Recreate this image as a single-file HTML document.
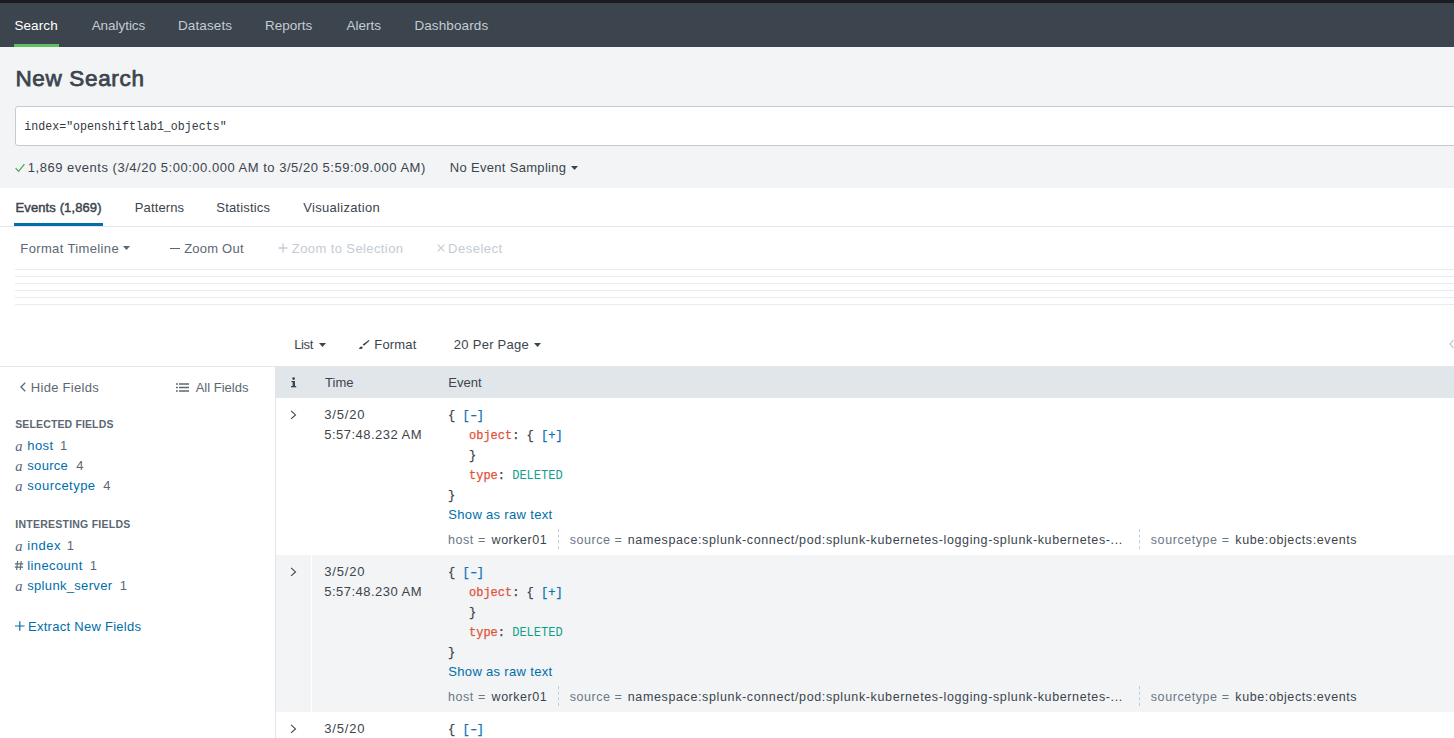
<!DOCTYPE html>
<html><head><meta charset="utf-8">
<style>
*{margin:0;padding:0;box-sizing:border-box}
html,body{width:1454px;height:738px;overflow:hidden;background:#fff;font-family:"Liberation Sans",sans-serif;color:#3c444d}
.t{position:absolute;white-space:nowrap}
.b{position:absolute}
.s{position:absolute}
.r{position:absolute;left:276px;width:1178px;height:157px}
.tri{position:absolute;width:0;height:0;border-left:3.5px solid transparent;border-right:3.5px solid transparent;border-top:5px solid #3c444d}
.tl{position:absolute;left:15px;width:1439px;height:1px;background:#e9ebed}
.js{position:absolute;font-family:"Liberation Mono",monospace;font-size:12px;line-height:20px;color:#3c444d;white-space:nowrap}
.js .in{padding-left:21px}
.js{-webkit-text-stroke:0.25px currentColor}
.bl{color:#0b72b5}
.ky{color:#e0533a}
.vs{color:#12a08a;-webkit-text-stroke:0}
.sep{position:absolute;width:0;height:20px;border-left:1px dashed #c3cbd4}
</style></head><body>
<div class="b" style="left:0;top:0;width:1454px;height:3px;background:#1a1c21"></div>
<div class="b" style="left:0;top:3px;width:1454px;height:44px;background:#3c444d"></div>
<div class="b" style="left:14px;top:44px;width:45px;height:3px;background:#5cc05c"></div>
<div class="b" style="left:0;top:47px;width:1454px;height:141px;background:#f2f4f5"></div>
<div class="b" style="left:15px;top:106px;width:1450px;height:40px;background:#fff;border:1px solid #c3cbd4;border-radius:3px"></div>
<svg class="s" style="left:15px;top:163px" width="10" height="10" viewBox="0 0 10 10"><path d="M0.6 5.2 L3.6 8.4 L9.4 1.2" fill="none" stroke="#4aa54a" stroke-width="1.2"/></svg>
<svg class="s" style="left:570.5px;top:166px" width="7" height="4" viewBox="0 0 7 4"><path d="M0 0 H7 L3.5 4 Z" fill="#3c444d"/></svg>
<div class="b" style="left:14px;top:223px;width:89px;height:3px;background:#006eaa"></div>
<div class="b" style="left:0;top:226px;width:1454px;height:1px;background:#e1e6eb"></div>
<svg class="s" style="left:123px;top:246px" width="7" height="4" viewBox="0 0 7 4"><path d="M0 0 H7 L3.5 4 Z" fill="#5c6773"/></svg>
<div class="b" style="left:170px;top:248px;width:9.5px;height:1.4px;background:#5c6773"></div>
<svg class="s" style="left:278px;top:243px" width="10" height="10" viewBox="0 0 10 10"><path d="M5 0.5 V9.5 M0.5 5 H9.5" stroke="#c3cbd4" stroke-width="1.3"/></svg>
<svg class="s" style="left:436.5px;top:244px" width="8" height="8" viewBox="0 0 8 8"><path d="M0.7 0.7 L7.3 7.3 M7.3 0.7 L0.7 7.3" stroke="#c3cbd4" stroke-width="1.2"/></svg>
<div class="tl" style="top:269px"></div>
<div class="tl" style="top:276px"></div>
<div class="tl" style="top:283px"></div>
<div class="tl" style="top:290px"></div>
<div class="tl" style="top:297px"></div>
<div class="tl" style="top:304px"></div>
<svg class="s" style="left:319px;top:343px" width="7" height="4" viewBox="0 0 7 4"><path d="M0 0 H7 L3.5 4 Z" fill="#3c444d"/></svg>
<svg class="s" style="left:356px;top:338px" width="16" height="14" viewBox="0 0 16 14"><path d="M12.8 1.9 L13.6 2.7 L8 7.8 L6.6 6.5 Z" fill="#3c444d"/><path d="M3 10.9 C3.4 9.6 4.4 8.3 5.6 8.4 C6.8 8.6 7 9.8 6.1 10.6 C5.2 11.3 4 11.1 3 10.9 Z" fill="#3c444d"/></svg>
<svg class="s" style="left:533.5px;top:343px" width="7" height="4" viewBox="0 0 7 4"><path d="M0 0 H7 L3.5 4 Z" fill="#3c444d"/></svg>
<svg class="s" style="left:1449px;top:339px" width="5" height="10" viewBox="0 0 5 10"><path d="M4.5 1 L1 5 L4.5 9" fill="none" stroke="#c3cbd4" stroke-width="1.3"/></svg>
<div class="b" style="left:0;top:366px;width:276px;height:1px;background:#e1e6eb"></div>
<div class="b" style="left:275px;top:366px;width:1px;height:372px;background:#e1e6eb"></div>
<svg class="s" style="left:20px;top:382px" width="6" height="10" viewBox="0 0 6 10"><path d="M5.2 0.8 L1 5 L5.2 9.2" fill="none" stroke="#5c6773" stroke-width="1.3"/></svg>
<svg class="s" style="left:176px;top:383px" width="13" height="10" viewBox="0 0 13 10"><g fill="#5c6773"><rect x="0" y="0.25" width="1.8" height="1.5"/><rect x="3" y="0.25" width="10" height="1.5"/><rect x="0" y="3.75" width="1.8" height="1.5"/><rect x="3" y="3.75" width="10" height="1.5"/><rect x="0" y="7.25" width="1.8" height="1.5"/><rect x="3" y="7.25" width="10" height="1.5"/></g></svg>
<div class="t" style="left:15.2px;top:438.5px;font-family:'Liberation Serif',serif;font-style:italic;font-size:14.5px;line-height:14px;color:#5c6773">a</div>
<div class="t" style="left:15.2px;top:458.5px;font-family:'Liberation Serif',serif;font-style:italic;font-size:14.5px;line-height:14px;color:#5c6773">a</div>
<div class="t" style="left:15.2px;top:478.5px;font-family:'Liberation Serif',serif;font-style:italic;font-size:14.5px;line-height:14px;color:#5c6773">a</div>
<div class="t" style="left:15.2px;top:538.5px;font-family:'Liberation Serif',serif;font-style:italic;font-size:14.5px;line-height:14px;color:#5c6773">a</div>
<svg class="s" style="left:14px;top:560px" width="10" height="11" viewBox="0 0 10 11"><path d="M3.6 1 L2.6 10 M7.2 1 L6.2 10 M1 3.9 H9.2 M0.8 7.1 H9" stroke="#5c6773" stroke-width="1.1" fill="none"/></svg>
<div class="t" style="left:15.2px;top:578.5px;font-family:'Liberation Serif',serif;font-style:italic;font-size:14.5px;line-height:14px;color:#5c6773">a</div>
<svg class="s" style="left:15px;top:621px" width="10" height="10" viewBox="0 0 10 10"><path d="M4.8 0.3 V9.7 M0 5 H9.6" stroke="#006eaa" stroke-width="1.2"/></svg>
<div class="b" style="left:276px;top:366px;width:1178px;height:32px;background:#e1e6eb"></div>
<svg class="s" style="left:286px;top:374px" width="16" height="16" viewBox="0 0 16 16"><g fill="#3c444d"><circle cx="7.6" cy="4.6" r="1.35"/><rect x="6.6" y="7" width="2.4" height="6"/><rect x="5.3" y="7" width="2" height="1.1"/><rect x="5" y="12" width="5.2" height="1.3"/></g></svg>
<div class="r" style="top:398px;background:#fff"></div>
<svg class="s" style="left:290px;top:409.5px" width="7" height="10" viewBox="0 0 7 10"><path d="M1.1 0.9 L5.5 4.9 L1.1 8.9" fill="none" stroke="#3c444d" stroke-width="1.1"/></svg>
<div class="js" style="left:448px;top:405.5px">
<div>{ <span class="bl">[<span style="display:inline-block;transform:scaleX(1.45)">-</span>]</span></div>
<div class="in"><span class="ky">object</span>: { <span class="bl">[+]</span></div>
<div class="in">}</div>
<div class="in"><span class="ky">type</span>: <span class="vs">DELETED</span></div>
<div>}</div>
</div>
<div class="sep" style="left:558px;top:529px"></div>
<div class="sep" style="left:1139px;top:529px"></div>
<div class="r" style="top:555px;background:#f2f4f5"></div>
<div class="b" style="left:311px;top:555px;width:1px;height:157px;background:#fff"></div>
<svg class="s" style="left:290px;top:566.5px" width="7" height="10" viewBox="0 0 7 10"><path d="M1.1 0.9 L5.5 4.9 L1.1 8.9" fill="none" stroke="#3c444d" stroke-width="1.1"/></svg>
<div class="js" style="left:448px;top:562.5px">
<div>{ <span class="bl">[<span style="display:inline-block;transform:scaleX(1.45)">-</span>]</span></div>
<div class="in"><span class="ky">object</span>: { <span class="bl">[+]</span></div>
<div class="in">}</div>
<div class="in"><span class="ky">type</span>: <span class="vs">DELETED</span></div>
<div>}</div>
</div>
<div class="sep" style="left:558px;top:686px"></div>
<div class="sep" style="left:1139px;top:686px"></div>
<div class="r" style="top:712px;background:#fff"></div>
<svg class="s" style="left:290px;top:723.5px" width="7" height="10" viewBox="0 0 7 10"><path d="M1.1 0.9 L5.5 4.9 L1.1 8.9" fill="none" stroke="#3c444d" stroke-width="1.1"/></svg>
<div class="js" style="left:448px;top:719.5px">
<div>{ <span class="bl">[<span style="display:inline-block;transform:scaleX(1.45)">-</span>]</span></div>
<div class="in"><span class="ky">object</span>: { <span class="bl">[+]</span></div>
<div class="in">}</div>
<div class="in"><span class="ky">type</span>: <span class="vs">DELETED</span></div>
<div>}</div>
</div>
<div class="sep" style="left:558px;top:843px"></div>
<div class="sep" style="left:1139px;top:843px"></div>

<div id="nav1" class="t" style="left:14.42px;top:19.00px;font-size:13.5px;line-height:13.5px;font-weight:normal;color:#fff;font-family:'Liberation Sans',sans-serif;letter-spacing:0.096px">Search</div>
<div id="nav2" class="t" style="left:91.64px;top:19.00px;font-size:13.5px;line-height:13.5px;font-weight:normal;color:#c3cbd4;font-family:'Liberation Sans',sans-serif;letter-spacing:-0.040px">Analytics</div>
<div id="nav3" class="t" style="left:178.00px;top:19.00px;font-size:13.5px;line-height:13.5px;font-weight:normal;color:#c3cbd4;font-family:'Liberation Sans',sans-serif;letter-spacing:0.114px">Datasets</div>
<div id="nav4" class="t" style="left:265.00px;top:19.00px;font-size:13.5px;line-height:13.5px;font-weight:normal;color:#c3cbd4;font-family:'Liberation Sans',sans-serif;letter-spacing:0.000px">Reports</div>
<div id="nav5" class="t" style="left:346.60px;top:19.00px;font-size:13.5px;line-height:13.5px;font-weight:normal;color:#c3cbd4;font-family:'Liberation Sans',sans-serif;letter-spacing:0.000px">Alerts</div>
<div id="nav6" class="t" style="left:414.38px;top:19.00px;font-size:13.5px;line-height:13.5px;font-weight:normal;color:#c3cbd4;font-family:'Liberation Sans',sans-serif;letter-spacing:0.107px">Dashboards</div>
<div id="title" class="t" style="left:15.46px;top:68.00px;font-size:22.5px;line-height:22.5px;font-weight:normal;color:#3c444d;font-family:'Liberation Sans',sans-serif;letter-spacing:0.658px;-webkit-text-stroke:0.75px #3c444d">New Search</div>
<div id="q" class="t" style="left:24.26px;top:120.96px;font-size:11.6px;line-height:11.6px;font-weight:normal;color:#33393f;font-family:'Liberation Mono',monospace;letter-spacing:0.023px;transform:scaleY(1.18);transform-origin:0 9.28px">index="openshiftlab1_objects"</div>
<div id="status" class="t" style="left:27.80px;top:160.91px;font-size:13px;line-height:13px;font-weight:normal;color:#3c444d;font-family:'Liberation Sans',sans-serif;letter-spacing:0.517px">1,869 events (3/4/20 5:00:00.000 AM to 3/5/20 5:59:09.000 AM)</div>
<div id="sampling" class="t" style="left:449.84px;top:160.91px;font-size:13px;line-height:13px;font-weight:normal;color:#3c444d;font-family:'Liberation Sans',sans-serif;letter-spacing:0.310px">No Event Sampling</div>
<div id="tab1" class="t" style="left:15.57px;top:201.31px;font-size:13px;line-height:13px;font-weight:normal;color:#3c444d;font-family:'Liberation Sans',sans-serif;letter-spacing:0.105px;-webkit-text-stroke:0.45px #3c444d">Events (1,869)</div>
<div id="tab2" class="t" style="left:134.76px;top:201.31px;font-size:13px;line-height:13px;font-weight:normal;color:#3c444d;font-family:'Liberation Sans',sans-serif;letter-spacing:0.137px">Patterns</div>
<div id="tab3" class="t" style="left:216.34px;top:201.31px;font-size:13px;line-height:13px;font-weight:normal;color:#3c444d;font-family:'Liberation Sans',sans-serif;letter-spacing:0.178px">Statistics</div>
<div id="tab4" class="t" style="left:303.18px;top:201.31px;font-size:13px;line-height:13px;font-weight:normal;color:#3c444d;font-family:'Liberation Sans',sans-serif;letter-spacing:0.320px">Visualization</div>
<div id="fmt" class="t" style="left:20.34px;top:241.71px;font-size:13px;line-height:13px;font-weight:normal;color:#5c6773;font-family:'Liberation Sans',sans-serif;letter-spacing:0.366px">Format Timeline</div>
<div id="zout" class="t" style="left:184.14px;top:241.71px;font-size:13px;line-height:13px;font-weight:normal;color:#5c6773;font-family:'Liberation Sans',sans-serif;letter-spacing:0.229px">Zoom Out</div>
<div id="zsel" class="t" style="left:291.84px;top:241.71px;font-size:13px;line-height:13px;font-weight:normal;color:#c3cbd4;font-family:'Liberation Sans',sans-serif;letter-spacing:0.400px">Zoom to Selection</div>
<div id="desel" class="t" style="left:448.04px;top:241.71px;font-size:13px;line-height:13px;font-weight:normal;color:#c3cbd4;font-family:'Liberation Sans',sans-serif;letter-spacing:0.503px">Deselect</div>
<div id="list" class="t" style="left:294.26px;top:338.11px;font-size:13px;line-height:13px;font-weight:normal;color:#3c444d;font-family:'Liberation Sans',sans-serif;letter-spacing:-0.373px">List</div>
<div id="format" class="t" style="left:374.30px;top:338.11px;font-size:13px;line-height:13px;font-weight:normal;color:#3c444d;font-family:'Liberation Sans',sans-serif;letter-spacing:0.160px">Format</div>
<div id="perpage" class="t" style="left:453.80px;top:338.11px;font-size:13px;line-height:13px;font-weight:normal;color:#3c444d;font-family:'Liberation Sans',sans-serif;letter-spacing:0.272px">20 Per Page</div>
<div id="hide" class="t" style="left:30.80px;top:380.81px;font-size:13px;line-height:13px;font-weight:normal;color:#5c6773;font-family:'Liberation Sans',sans-serif;letter-spacing:0.288px">Hide Fields</div>
<div id="allf" class="t" style="left:195.64px;top:380.81px;font-size:13px;line-height:13px;font-weight:normal;color:#5c6773;font-family:'Liberation Sans',sans-serif;letter-spacing:0.018px">All Fields</div>
<div id="selh" class="t" style="left:15.22px;top:418.90px;font-size:10.5px;line-height:10.5px;font-weight:bold;color:#5c6773;font-family:'Liberation Sans',sans-serif;letter-spacing:0.137px">SELECTED FIELDS</div>
<div id="f1" class="t" style="left:27.34px;top:438.61px;font-size:13px;line-height:13px;font-weight:normal;color:#006eaa;font-family:'Liberation Sans',sans-serif;letter-spacing:0.373px">host</div>
<div id="f2" class="t" style="left:27.34px;top:458.61px;font-size:13px;line-height:13px;font-weight:normal;color:#006eaa;font-family:'Liberation Sans',sans-serif;letter-spacing:0.288px">source</div>
<div id="f3" class="t" style="left:27.34px;top:478.61px;font-size:13px;line-height:13px;font-weight:normal;color:#006eaa;font-family:'Liberation Sans',sans-serif;letter-spacing:0.462px">sourcetype</div>
<div id="c1" class="t" style="left:59.92px;top:438.61px;font-size:13px;line-height:13px;font-weight:normal;color:#5c6773;font-family:'Liberation Sans',sans-serif;letter-spacing:0.000px">1</div>
<div id="c2" class="t" style="left:76.18px;top:458.61px;font-size:13px;line-height:13px;font-weight:normal;color:#5c6773;font-family:'Liberation Sans',sans-serif;letter-spacing:0.000px">4</div>
<div id="c3" class="t" style="left:103.14px;top:478.61px;font-size:13px;line-height:13px;font-weight:normal;color:#5c6773;font-family:'Liberation Sans',sans-serif;letter-spacing:0.000px">4</div>
<div id="inth" class="t" style="left:15.26px;top:518.61px;font-size:10.5px;line-height:10.5px;font-weight:bold;color:#5c6773;font-family:'Liberation Sans',sans-serif;letter-spacing:0.245px">INTERESTING FIELDS</div>
<div id="f4" class="t" style="left:27.26px;top:538.61px;font-size:13px;line-height:13px;font-weight:normal;color:#006eaa;font-family:'Liberation Sans',sans-serif;letter-spacing:0.520px">index</div>
<div id="f5" class="t" style="left:27.26px;top:558.61px;font-size:13px;line-height:13px;font-weight:normal;color:#006eaa;font-family:'Liberation Sans',sans-serif;letter-spacing:0.380px">linecount</div>
<div id="f6" class="t" style="left:27.26px;top:578.61px;font-size:13px;line-height:13px;font-weight:normal;color:#006eaa;font-family:'Liberation Sans',sans-serif;letter-spacing:0.320px">splunk_server</div>
<div id="c4" class="t" style="left:66.84px;top:538.61px;font-size:13px;line-height:13px;font-weight:normal;color:#5c6773;font-family:'Liberation Sans',sans-serif;letter-spacing:0.000px">1</div>
<div id="c5" class="t" style="left:89.80px;top:558.61px;font-size:13px;line-height:13px;font-weight:normal;color:#5c6773;font-family:'Liberation Sans',sans-serif;letter-spacing:0.000px">1</div>
<div id="c6" class="t" style="left:119.80px;top:578.61px;font-size:13px;line-height:13px;font-weight:normal;color:#5c6773;font-family:'Liberation Sans',sans-serif;letter-spacing:0.000px">1</div>
<div id="extract" class="t" style="left:28.00px;top:619.61px;font-size:13px;line-height:13px;font-weight:normal;color:#006eaa;font-family:'Liberation Sans',sans-serif;letter-spacing:0.273px">Extract New Fields</div>
<div id="th_time" class="t" style="left:325.06px;top:375.90px;font-size:13px;line-height:13px;font-weight:normal;color:#3c444d;font-family:'Liberation Sans',sans-serif;letter-spacing:0.000px">Time</div>
<div id="th_event" class="t" style="left:448.34px;top:375.90px;font-size:13px;line-height:13px;font-weight:normal;color:#3c444d;font-family:'Liberation Sans',sans-serif;letter-spacing:0.040px">Event</div>
<div id="r0_d" class="t" style="left:324.26px;top:407.71px;font-size:13px;line-height:13px;font-weight:normal;color:#3c444d;font-family:'Liberation Sans',sans-serif;letter-spacing:0.800px">3/5/20</div>
<div id="r0_t" class="t" style="left:324.26px;top:427.81px;font-size:13px;line-height:13px;font-weight:normal;color:#3c444d;font-family:'Liberation Sans',sans-serif;letter-spacing:0.480px">5:57:48.232 AM</div>
<div id="r0_raw" class="t" style="left:448.34px;top:507.70px;font-size:13px;line-height:13px;font-weight:normal;color:#006eaa;font-family:'Liberation Sans',sans-serif;letter-spacing:0.320px">Show as raw text</div>
<div id="r0_mk1" class="t" style="left:447.92px;top:533.81px;font-size:12.5px;line-height:12.5px;font-weight:normal;color:#6b7785;font-family:'Liberation Sans',sans-serif;letter-spacing:0.576px">host =</div>
<div id="r0_v1" class="t" style="left:491.60px;top:533.81px;font-size:12.5px;line-height:12.5px;font-weight:normal;color:#3c444d;font-family:'Liberation Sans',sans-serif;letter-spacing:0.526px">worker01</div>
<div id="r0_mk2" class="t" style="left:569.72px;top:533.81px;font-size:12.5px;line-height:12.5px;font-weight:normal;color:#6b7785;font-family:'Liberation Sans',sans-serif;letter-spacing:0.526px">source =</div>
<div id="r0_v2" class="t" style="left:627.76px;top:533.81px;font-size:12.5px;line-height:12.5px;font-weight:normal;color:#3c444d;font-family:'Liberation Sans',sans-serif;letter-spacing:0.627px">namespace:splunk-connect/pod:splunk-kubernetes-logging-splunk-kubernetes-...</div>
<div id="r0_mk3" class="t" style="left:1150.80px;top:533.81px;font-size:12.5px;line-height:12.5px;font-weight:normal;color:#6b7785;font-family:'Liberation Sans',sans-serif;letter-spacing:0.567px">sourcetype =</div>
<div id="r0_v3" class="t" style="left:1235.34px;top:533.81px;font-size:12.5px;line-height:12.5px;font-weight:normal;color:#3c444d;font-family:'Liberation Sans',sans-serif;letter-spacing:0.596px">kube:objects:events</div>
<div id="r1_d" class="t" style="left:324.26px;top:564.70px;font-size:13px;line-height:13px;font-weight:normal;color:#3c444d;font-family:'Liberation Sans',sans-serif;letter-spacing:0.800px">3/5/20</div>
<div id="r1_t" class="t" style="left:324.26px;top:584.81px;font-size:13px;line-height:13px;font-weight:normal;color:#3c444d;font-family:'Liberation Sans',sans-serif;letter-spacing:0.480px">5:57:48.230 AM</div>
<div id="r1_raw" class="t" style="left:448.34px;top:664.70px;font-size:13px;line-height:13px;font-weight:normal;color:#006eaa;font-family:'Liberation Sans',sans-serif;letter-spacing:0.320px">Show as raw text</div>
<div id="r1_mk1" class="t" style="left:447.92px;top:690.81px;font-size:12.5px;line-height:12.5px;font-weight:normal;color:#6b7785;font-family:'Liberation Sans',sans-serif;letter-spacing:0.576px">host =</div>
<div id="r1_v1" class="t" style="left:491.60px;top:690.81px;font-size:12.5px;line-height:12.5px;font-weight:normal;color:#3c444d;font-family:'Liberation Sans',sans-serif;letter-spacing:0.526px">worker01</div>
<div id="r1_mk2" class="t" style="left:569.72px;top:690.81px;font-size:12.5px;line-height:12.5px;font-weight:normal;color:#6b7785;font-family:'Liberation Sans',sans-serif;letter-spacing:0.526px">source =</div>
<div id="r1_v2" class="t" style="left:627.76px;top:690.81px;font-size:12.5px;line-height:12.5px;font-weight:normal;color:#3c444d;font-family:'Liberation Sans',sans-serif;letter-spacing:0.627px">namespace:splunk-connect/pod:splunk-kubernetes-logging-splunk-kubernetes-...</div>
<div id="r1_mk3" class="t" style="left:1150.80px;top:690.81px;font-size:12.5px;line-height:12.5px;font-weight:normal;color:#6b7785;font-family:'Liberation Sans',sans-serif;letter-spacing:0.567px">sourcetype =</div>
<div id="r1_v3" class="t" style="left:1235.34px;top:690.81px;font-size:12.5px;line-height:12.5px;font-weight:normal;color:#3c444d;font-family:'Liberation Sans',sans-serif;letter-spacing:0.596px">kube:objects:events</div>
<div id="r2_d" class="t" style="left:324.26px;top:721.70px;font-size:13px;line-height:13px;font-weight:normal;color:#3c444d;font-family:'Liberation Sans',sans-serif;letter-spacing:0.800px">3/5/20</div>
<div id="r2_t" class="t" style="left:323.30px;top:741.10px;font-size:13px;line-height:13px;font-weight:normal;color:#3c444d;font-family:'Liberation Sans',sans-serif;letter-spacing:0.000px">5:57:48.228 AM</div>
<div id="r2_raw" class="t" style="left:447.70px;top:821.00px;font-size:13px;line-height:13px;font-weight:normal;color:#006eaa;font-family:'Liberation Sans',sans-serif;letter-spacing:0.000px">Show as raw text</div>
<div id="r2_mk1" class="t" style="left:447.60px;top:846.55px;font-size:12.5px;line-height:12.5px;font-weight:normal;color:#6b7785;font-family:'Liberation Sans',sans-serif;letter-spacing:0.000px">host =</div>
<div id="r2_v1" class="t" style="left:490.00px;top:846.55px;font-size:12.5px;line-height:12.5px;font-weight:normal;color:#3c444d;font-family:'Liberation Sans',sans-serif;letter-spacing:0.000px">worker01</div>
<div id="r2_mk2" class="t" style="left:568.60px;top:846.55px;font-size:12.5px;line-height:12.5px;font-weight:normal;color:#6b7785;font-family:'Liberation Sans',sans-serif;letter-spacing:0.000px">source =</div>
<div id="r2_v2" class="t" style="left:626.80px;top:846.55px;font-size:12.5px;line-height:12.5px;font-weight:normal;color:#3c444d;font-family:'Liberation Sans',sans-serif;letter-spacing:0.000px">namespace:splunk-connect/pod:splunk-kubernetes-logging-splunk-kubernetes-...</div>
<div id="r2_mk3" class="t" style="left:1150.00px;top:846.55px;font-size:12.5px;line-height:12.5px;font-weight:normal;color:#6b7785;font-family:'Liberation Sans',sans-serif;letter-spacing:0.000px">sourcetype =</div>
<div id="r2_v3" class="t" style="left:1234.70px;top:846.55px;font-size:12.5px;line-height:12.5px;font-weight:normal;color:#3c444d;font-family:'Liberation Sans',sans-serif;letter-spacing:0.000px">kube:objects:events</div>
</body></html>
